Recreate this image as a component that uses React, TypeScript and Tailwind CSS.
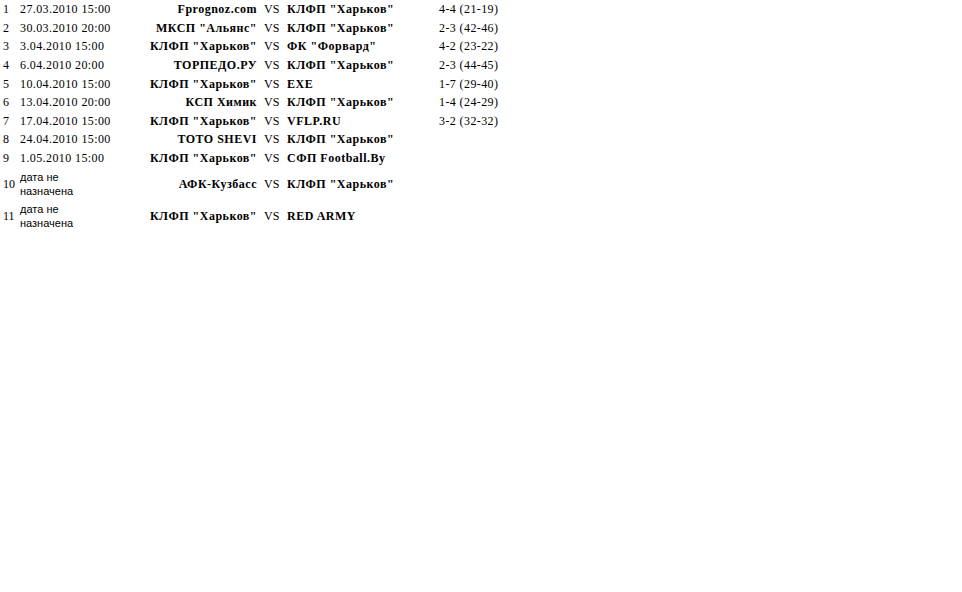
import React from "react";

type Match = {
	n: number;
	date: string | null;
	home: string;
	away: string;
	score?: string;
};

const matches: Match[] = [
	{ n: 1, date: "27.03.2010 15:00", home: "Fprognoz.com", away: 'КЛФП "Харьков"', score: "4-4 (21-19)" },
	{ n: 2, date: "30.03.2010 20:00", home: 'МКСП "Альянс"', away: 'КЛФП "Харьков"', score: "2-3 (42-46)" },
	{ n: 3, date: "3.04.2010 15:00", home: 'КЛФП "Харьков"', away: 'ФК "Форвард"', score: "4-2 (23-22)" },
	{ n: 4, date: "6.04.2010 20:00", home: "ТОРПЕДО.РУ", away: 'КЛФП "Харьков"', score: "2-3 (44-45)" },
	{ n: 5, date: "10.04.2010 15:00", home: 'КЛФП "Харьков"', away: "EXE", score: "1-7 (29-40)" },
	{ n: 6, date: "13.04.2010 20:00", home: "КСП Химик", away: 'КЛФП "Харьков"', score: "1-4 (24-29)" },
	{ n: 7, date: "17.04.2010 15:00", home: 'КЛФП "Харьков"', away: "VFLP.RU", score: "3-2 (32-32)" },
	{ n: 8, date: "24.04.2010 15:00", home: "TOTO SHEVI", away: 'КЛФП "Харьков"' },
	{ n: 9, date: "1.05.2010 15:00", home: 'КЛФП "Харьков"', away: "СФП Football.By" },
	{ n: 10, date: null, home: "АФК-Кузбасс", away: 'КЛФП "Харьков"' },
	{ n: 11, date: null, home: 'КЛФП "Харьков"', away: "RED ARMY" },
];

export default function App() {
	return (
		<div className="bg-white w-[962px] h-[592px] text-black font-['Liberation_Serif','Times_New_Roman',serif] text-[12px] leading-[14px]">
			<table className="table-fixed border-collapse w-[500px]">
				<colgroup>
					<col className="w-[19px]" />
					<col className="w-[111px]" />
					<col className="w-[130px]" />
					<col className="w-[24px]" />
					<col className="w-[152px]" />
					<col className="w-[64px]" />
				</colgroup>
				<tbody>
					{matches.map((m) => (
						<tr
							key={m.n}
							className={m.date ? "h-[18.6px]" : "h-[32.5px]"}
						>
							<td className="pl-[3px] align-middle">{m.n}</td>
							<td className="pl-[1px] align-middle tracking-[0.4px] whitespace-nowrap">
								{m.date ? (
									m.date
								) : (
									<span className="block tracking-normal font-['Liberation_Sans',Arial,sans-serif] text-[11px] leading-[14px]">
										дата не
										<br />
										назначена
									</span>
								)}
							</td>
							<td className="pr-[3px] text-right font-bold tracking-[0.5px] align-middle whitespace-nowrap">
								{m.home}
							</td>
							<td className="pl-[4px] align-middle">VS</td>
							<td className="pl-[3px] font-bold tracking-[0.5px] align-middle whitespace-nowrap">
								{m.away}
							</td>
							<td className="pl-[3px] align-middle tracking-[0.4px] whitespace-nowrap">
								{m.score ?? ""}
							</td>
						</tr>
					))}
				</tbody>
			</table>
		</div>
	);
}
